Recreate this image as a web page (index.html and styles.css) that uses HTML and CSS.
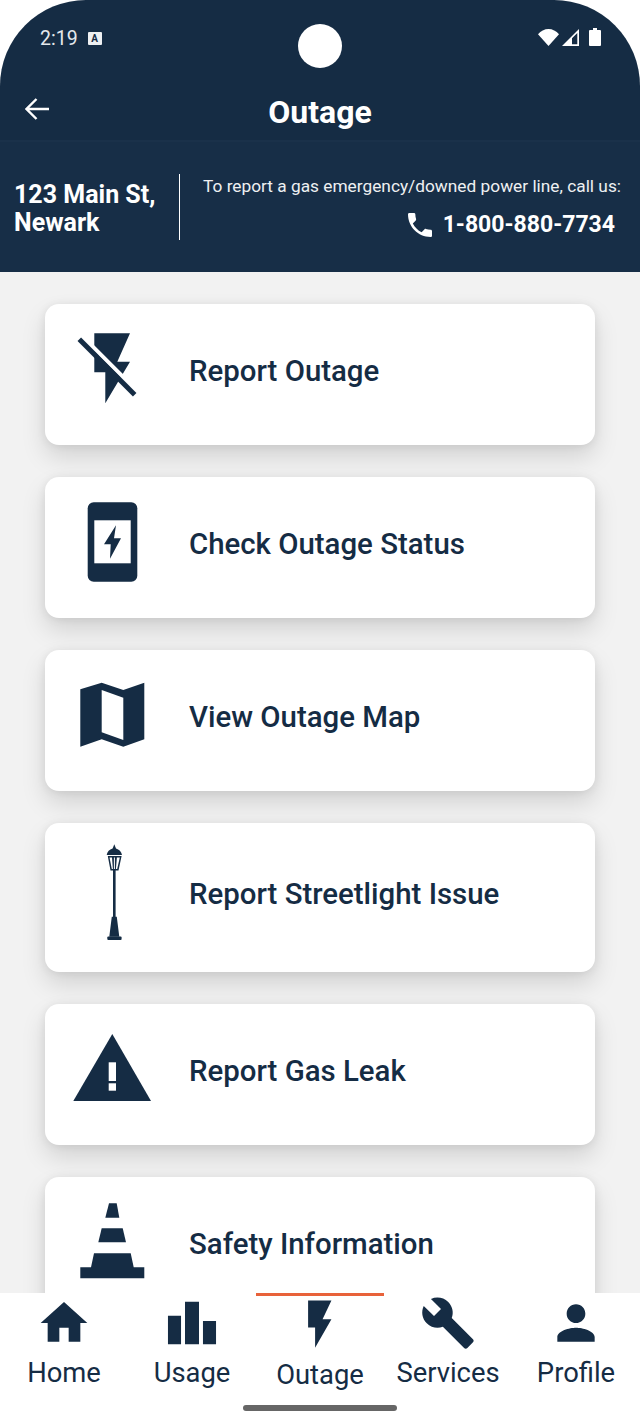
FILE: index.html
```html
<!DOCTYPE html>
<html lang="en">
<head>
<meta charset="utf-8">
<title>Outage</title>
<link rel="stylesheet" href="styles.css">
</head>
<body>
<div class="screen">
  <header class="top">
    <div class="status">
      <span class="time">2:19</span>
      <span class="a-badge">A</span>
      <span class="status-spacer"></span>
      <svg class="st-wifi" viewBox="0 0 21 17"><path d="M0 5.2C2.8 2 6.5 0 10.5 0s7.700 2 10.500 5.200L10.500 17z"/></svg>
      <svg class="st-signal" viewBox="0 0 17 17"><path fill-rule="evenodd" d="M17 0v17H0zM15.300 4L10 9.300V15.300H15.300z"/></svg>
      <svg class="st-battery" viewBox="0 0 12 18"><path d="M4 0h4v2h3a1 1 0 0 1 1 1v14a1 1 0 0 1-1 1H1a1 1 0 0 1-1-1V3a1 1 0 0 1 1-1h3z"/></svg>
    </div>
    <div class="camera"></div>
    <div class="appbar">
      <svg class="back" viewBox="0 0 24 22"><path d="M24 11H1.500M11.500 1L1.500 11l10 10"/></svg>
      <h1 class="title">Outage</h1>
    </div>
    <div class="info">
      <div class="address">123 Main St,<br>Newark</div>
      <div class="contact">
        <p class="contact-text">To report a gas emergency/downed power line, call us:</p>
        <div class="phone">
          <svg class="phone-icon" viewBox="3 3 18 18"><path d="M6.620 10.790c1.440 2.830 3.760 5.140 6.590 6.590l2.200-2.200c.27-.27.67-.36 1.020-.24 1.120.37 2.330.57 3.570.57.550 0 1 .45 1 1V20c0 .55-.45 1-1 1-9.390 0-17-7.610-17-17 0-.55.45-1 1-1h3.500c.55 0 1 .45 1 1 0 1.250.2 2.450.57 3.570.11.350.03.74-.25 1.020l-2.200 2.200z"/></svg>
          <span>1-800-880-7734</span>
        </div>
      </div>
    </div>
  </header>

  <main class="list">
    <a class="card">
      <svg class="card-icon" viewBox="0 0 100 101">
        <path d="M32.300 9.300H68L55.300 37.700H68L43.300 79.300V48.300H32.300z"/>
        <path class="gap" d="M20.500 12.500L76 68"/>
        <path class="slash" d="M17.300 15.300L72.700 70.700"/>
      </svg>
      <span class="card-label">Report Outage</span>
    </a>
    <a class="card">
      <svg class="card-icon" viewBox="0 0 100 101">
        <rect x="25.700" y="5.300" width="49.600" height="79.400" rx="6"/>
        <rect class="knock" x="32.300" y="23.300" width="36.400" height="43"/>
        <path d="M54 28.300L42 47.300H48.700L48 61.700L59 41.300H52z"/>
      </svg>
      <span class="card-label">Check Outage Status</span>
    </a>
    <a class="card">
      <svg class="card-icon" viewBox="0 0 100 101">
        <path d="M18.300 19.300L39.700 12.700L61.300 20L82.300 12.700V69.300L61.300 76.700L39.700 69.300L18.300 76.700z"/>
        <path class="knock" d="M39.700 20L61.300 27.700V70L39.700 62.300z"/>
      </svg>
      <span class="card-label">View Outage Map</span>
    </a>
    <a class="card card-tall">
      <svg class="card-icon" viewBox="0 4 100 101">
        <path d="M52.300 1.300L54 5.500C57 6.500 59.500 8.500 60 12H44.700C45.200 8.500 47.500 6.500 50.600 5.500z"/>
        <path d="M45.800 13h13.800L56.500 27.500H48.500zM47.500 14.500L49.800 26H50.900L50 14.500zM51.900 14.500V26H52.900V14.500zM54.900 14.500L53.900 26H55.200L57.800 14.500z" fill-rule="evenodd"/>
        <rect x="51" y="27" width="2.600" height="47"/>
        <path d="M49.800 73.700H54.800L57.300 93.700H47.300z"/>
        <rect x="45.300" y="93.500" width="14.300" height="3.500" rx="1"/>
      </svg>
      <span class="card-label">Report Streetlight Issue</span>
    </a>
    <a class="card">
      <svg class="card-icon" viewBox="0 0 100 101">
        <path d="M50.300 10L89 77H11.300z"/>
        <rect class="knock" x="46.700" y="38.300" width="7.300" height="18.700"/>
        <rect class="knock" x="46.700" y="59.300" width="7.300" height="7.400"/>
      </svg>
      <span class="card-label">Report Gas Leak</span>
    </a>
    <a class="card">
      <svg class="card-icon" viewBox="0 0 100 101">
        <path d="M47 6.300H54.700L57.300 20.700H43.300z"/>
        <path d="M39.700 31.300H60.700L64 45.300H36.300z"/>
        <path d="M32 56.300H68.700L71.700 70.300H82.300V81.300H18.300V70.300H29z"/>
      </svg>
      <span class="card-label">Safety Information</span>
    </a>
  </main>

  <nav class="nav">
    <a class="nav-item">
      <svg class="nav-icon" viewBox="0 0 24 24"><path d="M10 20v-6h4v6h5v-8h3L12 3 2 12h3v8z"/></svg>
      <span class="nav-label">Home</span>
    </a>
    <a class="nav-item">
      <svg class="nav-icon" viewBox="0 0 24 24"><path d="M1.700 8.900H7.300V21.100H1.700zM9 2.900H15V21.100H9zM16.700 11.100H22.300V21.100H16.700z"/></svg>
      <span class="nav-label">Usage</span>
    </a>
    <a class="nav-item nav-item-active">
      <svg class="nav-icon" viewBox="0 0 24 24"><path d="M6.900 2.400H16.900L13.100 10.400H16.900L9.900 22.600V13.900H6.900z"/></svg>
      <span class="nav-label">Outage</span>
    </a>
    <a class="nav-item">
      <svg class="nav-icon" viewBox="0 0 24 24"><path d="M22.700 19l-9.100-9.100c.9-2.300.4-5-1.500-6.900-2-2-5-2.400-7.400-1.300L9 6 6 9 1.600 4.700C.4 7.100.9 10.100 2.900 12.100c1.900 1.900 4.600 2.400 6.900 1.500l9.100 9.100c.4.4 1 .4 1.400 0l2.300-2.300c.5-.4.500-1.100.1-1.400z"/></svg>
      <span class="nav-label">Services</span>
    </a>
    <a class="nav-item">
      <svg class="nav-icon" viewBox="0 0 24 24"><path d="M12 12c2.210 0 4-1.790 4-4s-1.790-4-4-4-4 1.790-4 4 1.790 4 4 4zm0 2c-2.670 0-8 1.340-8 4v2h16v-2c0-2.660-5.330-4-8-4z"/></svg>
      <span class="nav-label">Profile</span>
    </a>
    <div class="home-handle"></div>
  </nav>
</div>
</body>
</html>
```

FILE: styles.css
```css
* { box-sizing: border-box; }
html, body { margin: 0; padding: 0; background: #fff; }
body { font-family: Roboto, "Liberation Sans", sans-serif; color: #152c44; }

.screen {
  width: 640px;
  height: 1425px;
  display: flex;
  flex-direction: column;
  overflow: hidden;
  background: #f2f2f2;
  border-radius: 86px 86px 0 0;
  position: relative;
}

.top { background: #152c44; color: #fff; flex: none; }

.status {
  height: 70px;
  padding: 26px 39px 0 40px;
  display: flex;
  align-items: flex-start;
}
.time { margin-top: 1px; font-size: 19.500px; line-height: 24px; color: #e4e8ec; }
.a-badge {
  width: 14px;
  height: 13px;
  margin: 6px 0 0 10px;
  background: #eef0f2;
  color: #152c44;
  font-size: 10px;
  font-weight: 700;
  line-height: 13px;
  text-align: center;
  border-radius: 1px;
}
.status-spacer { flex: 1; }
.status svg { fill: #fff; display: block; }
.st-wifi { width: 21px; height: 17px; margin-top: 3px; }
.st-signal { width: 17px; height: 17px; margin: 3px 0 0 3px; }
.st-battery { width: 12px; height: 18px; margin: 2px 0 0 10px; }

.camera {
  position: absolute;
  left: 298px;
  top: 24px;
  width: 44px;
  height: 44px;
  border-radius: 50%;
  background: #fff;
}

.appbar {
  height: 72px;
  display: flex;
  align-items: center;
  justify-content: center;
  position: relative;
  border-bottom: 2px solid #1a314a;
}
.back {
  position: absolute;
  left: 25px;
  top: 28px;
  width: 24px;
  height: 22px;
  fill: none;
  stroke: #fff;
  stroke-width: 2.400;
}
.title { margin: 13px 0 0; font-size: 32px; font-weight: 700; line-height: 40px; }

.info {
  height: 130px;
  display: flex;
  align-items: center;
  background: #172e47;
  padding: 0 19px 0 14px;
}
.address {
  width: 166px;
  height: 66px;
  border-right: 1.500px solid #fff;
  font-size: 25px;
  font-weight: 700;
  line-height: 28px;
  padding-top: 7px;
  white-space: nowrap;
}
.contact { flex: 1; display: flex; flex-direction: column; align-items: flex-end; }
.contact-text { margin: 0; font-size: 17.300px; line-height: 24px; color: #eef0f2; white-space: nowrap; }
.phone {
  display: flex;
  align-items: center;
  gap: 11px;
  margin: 12px 6px 0 0;
  font-size: 23px;
  font-weight: 700;
  line-height: 30px;
}
.phone-icon { width: 24px; height: 24px; fill: #fff; }

.list {
  flex: 1;
  min-height: 0;
  overflow: hidden;
  padding: 32px 45px 0;
  display: flex;
  flex-direction: column;
  gap: 32px;
}
.card {
  flex: none;
  height: 141px;
  display: flex;
  align-items: center;
  gap: 27px;
  padding-left: 17px;
  background: #fff;
  border-radius: 14px;
  box-shadow: 0 12px 24px rgba(0, 0, 0, .13), 0 1px 10px rgba(0, 0, 0, .08);
}
.card-tall { height: 149px; }
.card-icon { flex: none; width: 100px; height: 101px; fill: #152c44; overflow: visible; }
.knock { fill: #fff; }
.gap { fill: none; stroke: #fff; stroke-width: 4; }
.slash { fill: none; stroke: #152c44; stroke-width: 5; }
.card-label { font-size: 29.400px; font-weight: 500; line-height: 36px; padding-bottom: 8px; color: #152c44; }

.nav {
  flex: none;
  height: 132px;
  display: flex;
  background: #fff;
  position: relative;
}
.nav-item {
  width: 128px;
  padding-top: 2px;
  display: flex;
  flex-direction: column;
  align-items: center;
  position: relative;
}
.nav-icon { width: 56px; height: 56px; fill: #152c44; }
.nav-label { font-size: 27.400px; line-height: 32px; margin-top: 6px; }
.nav-item-active .nav-label { margin-top: 8px; }
.nav-item-active::before {
  content: "";
  position: absolute;
  left: 0;
  right: 0;
  top: 0;
  height: 3px;
  background: #e8623a;
}
.home-handle {
  position: absolute;
  left: 243px;
  top: 112px;
  width: 154px;
  height: 6px;
  border-radius: 3px;
  background: #666;
}
```
